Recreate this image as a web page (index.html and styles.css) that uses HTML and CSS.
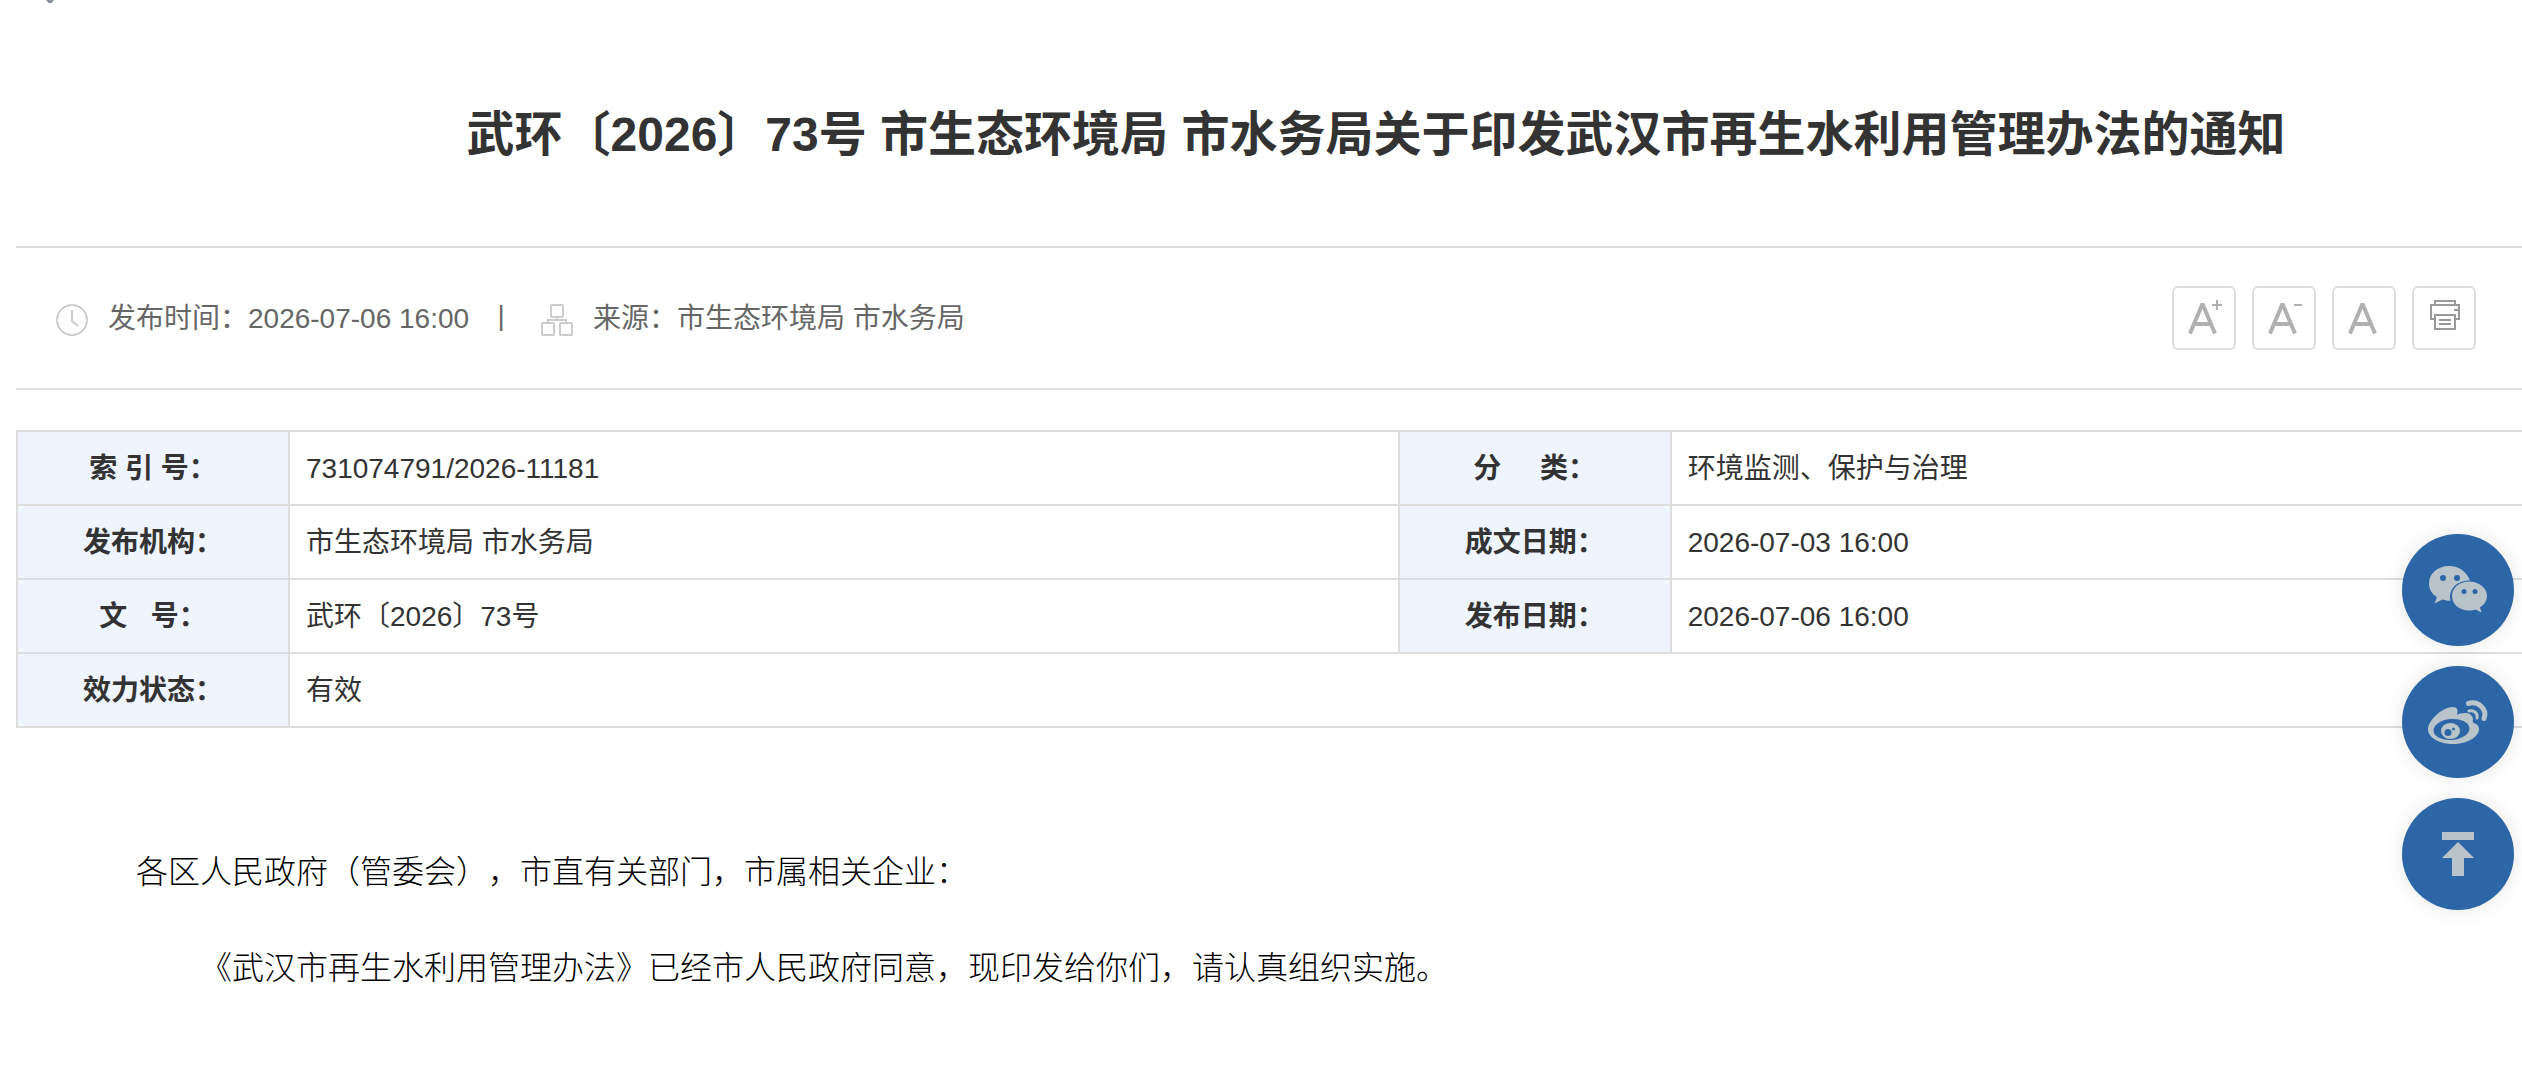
FILE: index.html
```html
<!DOCTYPE html>
<html lang="zh-CN">
<head>
    <meta charset="UTF-8">
    <meta name="viewport" content="width=device-width, initial-scale=1.0">
    <title>武环〔2026〕73号</title>
    <link rel="stylesheet" href="styles.css">
</head>
<body>

<div class="position">
    <svg class="pin" viewBox="0 0 8 4"><path d="M0 0h8L5.500 3h-3z"/></svg>
</div>

<h1 class="title">武环〔2026〕73号 市生态环境局 市水务局关于印发武汉市再生水利用管理办法的通知</h1>

<!-- 发布信息 -->
<div class="meta">
    <div class="meta-info">
        <svg class="meta-icon" viewBox="0 0 32 32">
            <circle cx="16" cy="16" r="15"/>
            <path d="M16 6v11l6 5"/>
        </svg>
        <span>发布时间：2026-07-06 16:00</span>
        <span class="split">|</span>
        <svg class="meta-icon" viewBox="0 0 32 32">
            <rect x="10" y="1" width="12" height="12" rx="1"/>
            <rect x="1" y="19" width="12" height="12" rx="1"/>
            <rect x="19" y="19" width="12" height="12" rx="1"/>
            <path d="M16 13v3M7 19v-3h18v3"/>
        </svg>
        <span>来源：市生态环境局 市水务局</span>
    </div>
    <div class="tools">
        <button type="button" class="tool" aria-label="放大字体">
            <svg viewBox="0 0 60 60"><path class="letter" d="M16 45.500L28 17h1l12 28.500M20 36h17"/><path class="sign" d="M38 17h10M43 12v10"/></svg>
        </button>
        <button type="button" class="tool" aria-label="缩小字体">
            <svg viewBox="0 0 60 60"><path class="letter" d="M16 45.500L28 17h1l12 28.500M20 36h17"/><path class="sign" d="M40 17h8"/></svg>
        </button>
        <button type="button" class="tool" aria-label="默认字体">
            <svg viewBox="0 0 60 60"><path class="letter" d="M16 45.500L28 17h1l12 28.500M20 36h17"/></svg>
        </button>
        <button type="button" class="tool" aria-label="打印">
            <svg viewBox="0 0 60 60"><path class="print" d="M21 17v-4h20v4M21 31h-4V17h28v14h-4M21 27h20v14H21zM25 32h12M25 36h12M40 22h4"/></svg>
        </button>
    </div>
</div>

<!-- 索引表 -->
<div class="index-wrap">
    <table class="index-table">
        <colgroup>
            <col class="col-label"><col class="col-value"><col class="col-label"><col>
        </colgroup>
        <tr>
            <th>索 引 号：</th>
            <td>731074791/2026-11181</td>
            <th>分&nbsp;&nbsp;&nbsp;&nbsp;&nbsp;类：</th>
            <td>环境监测、保护与治理</td>
        </tr>
        <tr>
            <th>发布机构：</th>
            <td>市生态环境局 市水务局</td>
            <th>成文日期：</th>
            <td>2026-07-03 16:00</td>
        </tr>
        <tr>
            <th>文&nbsp;&nbsp;&nbsp;号：</th>
            <td>武环〔2026〕73号</td>
            <th>发布日期：</th>
            <td>2026-07-06 16:00</td>
        </tr>
        <tr>
            <th>效力状态：</th>
            <td colspan="3">有效</td>
        </tr>
    </table>
</div>

<!-- 正文 -->
<div class="content">
    <p>各区人民政府（管委会），市直有关部门，市属相关企业：</p>
    <p class="indent">《武汉市再生水利用管理办法》已经市人民政府同意，现印发给你们，请认真组织实施。</p>
</div>

<!-- 右侧悬浮按钮 -->
<div class="side-bar">
    <a href="#" aria-label="微信">
        <svg viewBox="0 0 112 112">
            <path d="M47 32c-12 0-20 8-20 17.500 0 6 3 10.500 8 13.500l-2.500 6.500 8-4c3 1 5 1.200 8 1.200C46 54 56 46.500 68 46.500 65 38 57 32 47 32z"/>
            <path d="M67 47.500c-10 0-17 6.500-17 14.500s7 14.500 17 14.500c2.500 0 4.500-.3 6.500-1l6 3-1.500-5c4.500-3 7-7 7-11.500 0-8-8-14.500-18-14.500z"/>
            <g class="hole"><circle cx="41" cy="44" r="3"/><circle cx="55" cy="44" r="3"/><circle cx="62" cy="57.500" r="2.500"/><circle cx="73" cy="57.500" r="2.500"/></g>
        </svg>
    </a>
    <a href="#" aria-label="微博">
        <svg viewBox="0 0 112 112">
            <path d="M26 63c0-8 14-22 25-22 5 0 5 4 4 8 6-3 15-3 16 4 0 2-1 3 1 4 3 1 5 3 5 6 0 8-12 15-26 15-13 0-25-6-25-15z"/>
            <ellipse class="hole" cx="49.500" cy="63.500" rx="18" ry="10.500" transform="rotate(-5 49.500 63.500)"/>
            <ellipse cx="48.500" cy="65" rx="9.500" ry="8"/>
            <g class="hole"><circle cx="46" cy="66.500" r="3.500"/><circle cx="51.500" cy="63" r="1.500"/></g>
            <path class="wave" d="M66.500 37.500c10-3 19 6 15.500 15"/>
            <path class="wave thin" d="M67 45c5-1 9 2 8 7"/>
        </svg>
    </a>
    <a href="#" aria-label="返回顶部">
        <svg viewBox="0 0 112 112">
            <path d="M40 34h32v8H40zM56 44l16 16H62v18H50V60H40z"/>
        </svg>
    </a>
</div>

</body>
</html>
```
FILE: styles.css
```css
body {
    margin: 0;
    padding: 0;
    background-color: #fff;
    color: #333;
    font-family: "Liberation Sans", "Noto Sans CJK SC", sans-serif;
    font-size: 28px;
    text-spacing-trim: space-all;
}

/* 标题 */
.position {
    height: 103px;
    padding-left: 46px;
}

.pin {
    display: block;
    width: 8px;
    height: 4px;
    fill: #8a8f9c;
}

.title {
    margin: 0;
    padding: 0 0 79px 230px;
    font-size: 48px;
    line-height: 64px;
    text-align: center;
}

/* 发布信息 */
.meta {
    display: flex;
    justify-content: space-between;
    align-items: center;
    height: 140px;
    margin-left: 16px;
    padding: 0 46px 0 40px;
    border-top: 2px solid #ddd;
    border-bottom: 2px solid #ddd;
    color: #666;
}

.meta-info {
    display: flex;
    align-items: center;
}

.meta-info span {
    padding-bottom: 4px;
}

.meta-icon {
    width: 32px;
    height: 32px;
    margin-right: 20px;
    margin-top: 4px;
    fill: none;
    stroke: #ccc;
    stroke-width: 2;
}

.split {
    width: 64px;
    margin-right: 8px;
    text-align: center;
}

.tools {
    display: flex;
    gap: 16px;
}

.tool {
    width: 64px;
    height: 64px;
    padding: 0;
    border: 2px solid #ddd;
    border-radius: 6px;
    background-color: #fff;
    cursor: pointer;
}

.tool svg {
    display: block;
    width: 60px;
    height: 60px;
    fill: none;
}

.letter {
    stroke: #b0b0b0;
    stroke-width: 4;
}

.sign {
    stroke: #b0b0b0;
    stroke-width: 2;
}

.print {
    stroke: #999;
    stroke-width: 2;
}

/* 索引表 */
.index-wrap {
    padding: 40px 0 0 16px;
}

.index-table {
    width: 100%;
    border-collapse: collapse;
    table-layout: fixed;
}

.col-label {
    width: 272px;
}

.col-value {
    width: 44vw;
}

.index-table th,
.index-table td {
    height: 74px;
    padding: 1px 16px 0;
    border: 2px solid #ddd;
    box-sizing: border-box;
    line-height: 42px;
    text-align: left;
}

.index-table td:last-child {
    border-right: 0;
}

.index-table th {
    padding: 1px 0 0;
    background-color: #eef5ff;
    text-align: center;
}

/* 正文 */
.content {
    margin-top: 93px;
    padding: 0 136px;
    color: #000;
    font-family: "Noto Sans CJK SC", sans-serif;
    font-size: 32px;
    font-weight: 300;
    line-height: 96px;
}

.content p {
    margin: 0;
}

.content .indent {
    text-indent: 2em;
}

/* 右侧悬浮按钮 */
.side-bar {
    position: fixed;
    top: 534px;
    right: 8px;
    display: flex;
    flex-direction: column;
    gap: 20px;
}

.side-bar a {
    width: 112px;
    height: 112px;
    border-radius: 50%;
    background-color: #2c66a6;
    box-shadow: 0 0 20px rgba(0, 0, 0, 0.1);
}

.side-bar svg {
    display: block;
    fill: #b9c3ca;
}

.side-bar .hole {
    fill: #2c66a6;
}

.side-bar .wave {
    fill: none;
    stroke: #b9c3ca;
    stroke-width: 5;
    stroke-linecap: round;
}

.side-bar .thin {
    stroke-width: 3;
}
```
